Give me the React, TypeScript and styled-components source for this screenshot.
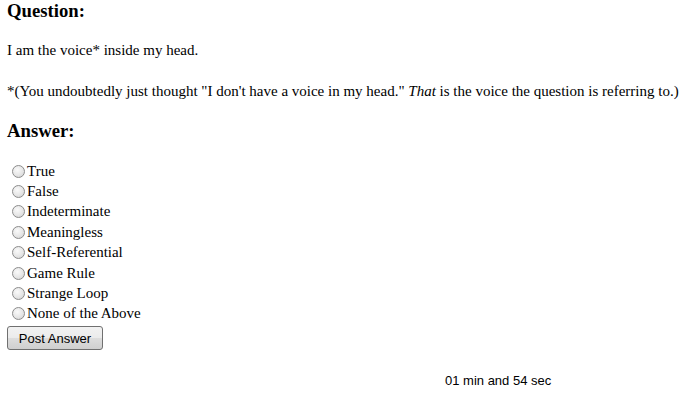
import React from "react";
import styled, { createGlobalStyle } from "styled-components";

const GlobalStyle = createGlobalStyle`
  body {
    margin: 0;
    background: #ffffff;
    color: #000000;
    font-family: "Liberation Serif", "Times New Roman", serif;
    font-size: 15px;
  }
`;

const Page = styled.div`
  padding: 0 7px;
`;

const Heading = styled.h3`
  margin: 0;
  font-size: 18.7px;
  font-weight: bold;
  line-height: 22px;
`;

const Paragraph = styled.p`
  margin: 0;
  line-height: 17px;
`;

const Section = styled.div<{ $top: number }>`
  margin-top: ${(p) => p.$top}px;
`;

const AnswerList = styled.div`
  display: flex;
  flex-direction: column;
  margin-top: 19px;
`;

const Option = styled.label`
  display: flex;
  align-items: center;
  height: 20.4px;
  padding-left: 5px;
  cursor: default;
`;

const Radio = styled.input`
  appearance: none;
  width: 13px;
  height: 13px;
  margin: 0 2px 0 0;
  border-radius: 50%;
  border: 1px solid #8c8c8c;
  background: radial-gradient(circle at 40% 35%, #fafafa 0%, #e6e6e6 55%, #cfcfcf 100%);
  box-sizing: border-box;
`;

const Button = styled.button`
  display: block;
  margin-top: 2px;
  width: 96px;
  height: 24px;
  border: 1px solid #707070;
  border-radius: 3px;
  background: linear-gradient(#f2f2f2 0%, #ebebeb 50%, #dddddd 51%, #cfcfcf 100%);
  font-family: "Liberation Sans", Arial, sans-serif;
  font-size: 13px;
  color: #000;
  padding: 0;
`;

const Timer = styled.div`
  margin-top: 23px;
  padding-left: 438px;
  font-family: "Liberation Sans", Arial, sans-serif;
  font-size: 13px;
  line-height: 15px;
`;

const options = [
  "True",
  "False",
  "Indeterminate",
  "Meaningless",
  "Self-Referential",
  "Game Rule",
  "Strange Loop",
  "None of the Above",
];

export default function App() {
  return (
    <>
      <GlobalStyle />
      <Page>
        <Heading>Question:</Heading>
        <Section $top={20}>
          <Paragraph>I am the voice* inside my head.</Paragraph>
        </Section>
        <Section $top={24}>
          <Paragraph>
            *(You undoubtedly just thought "I don't have a voice in my head." <i>That</i> is the
            voice the question is referring to.)
          </Paragraph>
        </Section>
        <Section $top={20}>
          <Heading>Answer:</Heading>
        </Section>
        <AnswerList>
          {options.map((o) => (
            <Option key={o}>
              <Radio type="radio" name="answer" />
              {o}
            </Option>
          ))}
        </AnswerList>
        <Button>Post Answer</Button>
        <Timer>01 min and 54 sec</Timer>
      </Page>
    </>
  );
}
